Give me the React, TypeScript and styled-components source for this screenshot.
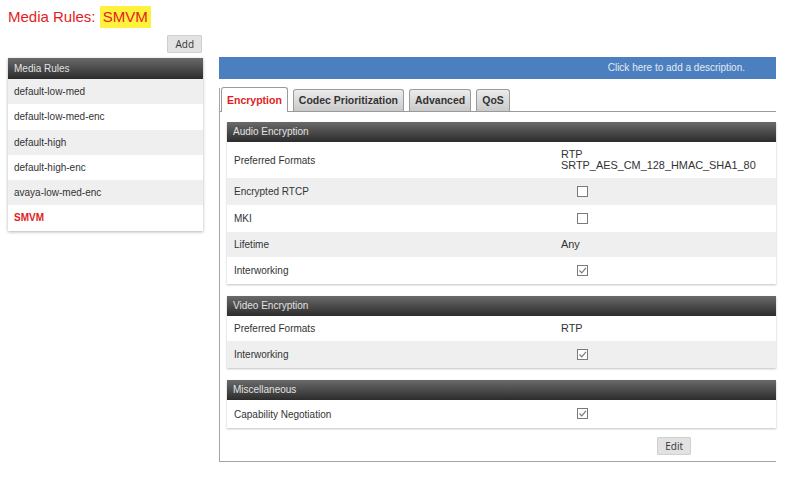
import styled, { createGlobalStyle } from 'styled-components';

const GlobalStyle = createGlobalStyle`
    body {
        margin: 0;
        background: #fff;
        font-family: "Liberation Sans", Arial, sans-serif;
        color: #333;
    }
`;

const Page = styled.div`
    width: 800px;
    height: 485px;
    padding: 6px 8px 0;
    box-sizing: border-box;
    overflow: hidden;
`;

const Title = styled.h1`
    margin: 0;
    font-size: 15px;
    font-weight: normal;
    line-height: 22px;
    color: #e31b23;
`;

const Highlight = styled.span`
    display: inline-block;
    background: #fff23d;
    padding: 0 3px;
`;

const Main = styled.div`
    display: flex;
    gap: 16px;
    margin-top: 7px;
`;

const Sidebar = styled.div`
    width: 195px;
    display: flex;
    flex-direction: column;
`;

const AddRow = styled.div`
    display: flex;
    justify-content: flex-end;
    padding-right: 1px;
    margin-bottom: 5px;
`;

const SmallButton = styled.button`
    height: 18px;
    padding: 0 7px;
    font-family: "Open Sans", sans-serif;
    font-size: 10px;
    color: #333;
    background: #e2e2e2;
    border: 1px solid #cfcfcf;
    border-radius: 1px;
`;

const DarkHeader = styled.div<{ $h: number }>`
    height: ${(p) => p.$h}px;
    line-height: ${(p) => p.$h}px;
    padding-left: 6px;
    font-size: 10px;
    color: #e2e2e2;
    background: linear-gradient(#6a6a6a, #2c2c2c);
`;

const RuleList = styled.div`
    box-shadow: 0 1px 3px rgba(0, 0, 0, 0.3);
`;

const RuleItem = styled.div<{ $active?: boolean }>`
    height: 25.3px;
    line-height: 25.3px;
    padding-left: 6px;
    font-size: 10px;
    color: ${(p) => (p.$active ? '#e31b23' : '#333')};
    font-weight: ${(p) => (p.$active ? 'bold' : 'normal')};
    &:nth-child(even) {
        background: #efefef;
    }
`;

const Content = styled.div`
    width: 557px;
    margin-top: 22px;
`;

const DescBar = styled.div`
    height: 22px;
    line-height: 22px;
    background: #4b7fbf;
    text-align: right;
    padding-right: 31px;
    font-size: 10px;
    color: #e3eaf4;
`;

const TabPanel = styled.div`
    margin-top: 9px;
    height: 374px;
    border-left: 1px solid #a5a5a5;
    border-bottom: 1px solid #a5a5a5;
    box-sizing: border-box;
`;

const TabStrip = styled.div`
    display: flex;
    align-items: flex-end;
    gap: 5px;
    height: 23px;
    padding-left: 1px;
    border-bottom: 1px solid #9a9a9a;
`;

const Tab = styled.div<{ $active?: boolean }>`
    height: ${(p) => (p.$active ? 24 : 21)}px;
    line-height: ${(p) => (p.$active ? 24 : 21)}px;
    margin-bottom: ${(p) => (p.$active ? -1 : 0)}px;
    padding: 0 5px;
    border: 1px solid #9a9a9a;
    border-bottom: none;
    border-radius: 3px 3px 0 0;
    font-size: 10.5px;
    font-weight: bold;
    color: ${(p) => (p.$active ? '#e31b23' : '#333')};
    background: ${(p) => (p.$active ? '#fff' : 'linear-gradient(#ececec, #c9c9c9)')};
`;

const Sections = styled.div`
    padding: 10px 0 0 7px;
    display: flex;
    flex-direction: column;
    gap: 12px;
`;

const Section = styled.div`
    box-shadow: 0 1px 2px rgba(0, 0, 0, 0.25);
`;

const Row = styled.div<{ $h?: number }>`
    display: grid;
    grid-template-columns: 334px 1fr;
    align-items: center;
    height: ${(p) => p.$h ?? 27}px;
    font-size: 10px;
    &:nth-child(even) {
        background: #efefef;
    }
`;

const Label = styled.div`
    padding-left: 7px;
`;

const Value = styled.div`
    font-size: 10.9px;
    line-height: 11px;
`;

const BoxWrap = styled.div`
    padding-left: 16px;
    display: flex;
`;

const Footer = styled.div`
    display: flex;
    justify-content: flex-end;
    padding: 9px 85px 0 0;
`;

const Check = ({ on }: { on?: boolean }) => (
    <BoxWrap>
        <svg width="12" height="12" viewBox="0 0 12 12">
            <rect x="0.5" y="0.5" width="10" height="10" fill="#fff" stroke="#7a7a7a" />
            {on && <path d="M2.5 5.5 L4.8 7.8 L9 2.8" fill="none" stroke="#7a7a7a" strokeWidth="1.2" />}
        </svg>
    </BoxWrap>
);

const rules = ['default-low-med', 'default-low-med-enc', 'default-high', 'default-high-enc', 'avaya-low-med-enc'];

const App = () => {
    return (
        <Page>
            <GlobalStyle />
            <Title>
                Media Rules: <Highlight>SMVM</Highlight>
            </Title>
            <Main>
                <Sidebar>
                    <AddRow>
                        <SmallButton>Add</SmallButton>
                    </AddRow>
                    <RuleList>
                        <DarkHeader $h={21}>Media Rules</DarkHeader>
                        {rules.map((r) => (
                            <RuleItem key={r}>{r}</RuleItem>
                        ))}
                        <RuleItem $active>SMVM</RuleItem>
                    </RuleList>
                </Sidebar>
                <Content>
                    <DescBar>Click here to add a description.</DescBar>
                    <TabPanel>
                        <TabStrip>
                            <Tab $active>Encryption</Tab>
                            <Tab>Codec Prioritization</Tab>
                            <Tab>Advanced</Tab>
                            <Tab>QoS</Tab>
                        </TabStrip>
                        <Sections>
                            <Section>
                                <DarkHeader $h={20}>Audio Encryption</DarkHeader>
                                <div>
                                    <Row $h={36}>
                                        <Label>Preferred Formats</Label>
                                        <Value>
                                            RTP
                                            <br />
                                            SRTP_AES_CM_128_HMAC_SHA1_80
                                        </Value>
                                    </Row>
                                    <Row>
                                        <Label>Encrypted RTCP</Label>
                                        <Check />
                                    </Row>
                                    <Row>
                                        <Label>MKI</Label>
                                        <Check />
                                    </Row>
                                    <Row $h={25}>
                                        <Label>Lifetime</Label>
                                        <Value>Any</Value>
                                    </Row>
                                    <Row>
                                        <Label>Interworking</Label>
                                        <Check on />
                                    </Row>
                                </div>
                            </Section>
                            <Section>
                                <DarkHeader $h={20}>Video Encryption</DarkHeader>
                                <div>
                                    <Row $h={25}>
                                        <Label>Preferred Formats</Label>
                                        <Value>RTP</Value>
                                    </Row>
                                    <Row>
                                        <Label>Interworking</Label>
                                        <Check on />
                                    </Row>
                                </div>
                            </Section>
                            <Section>
                                <DarkHeader $h={20}>Miscellaneous</DarkHeader>
                                <div>
                                    <Row $h={28}>
                                        <Label>Capability Negotiation</Label>
                                        <Check on />
                                    </Row>
                                </div>
                            </Section>
                        </Sections>
                        <Footer>
                            <SmallButton>Edit</SmallButton>
                        </Footer>
                    </TabPanel>
                </Content>
            </Main>
        </Page>
    );
};

export default App;
